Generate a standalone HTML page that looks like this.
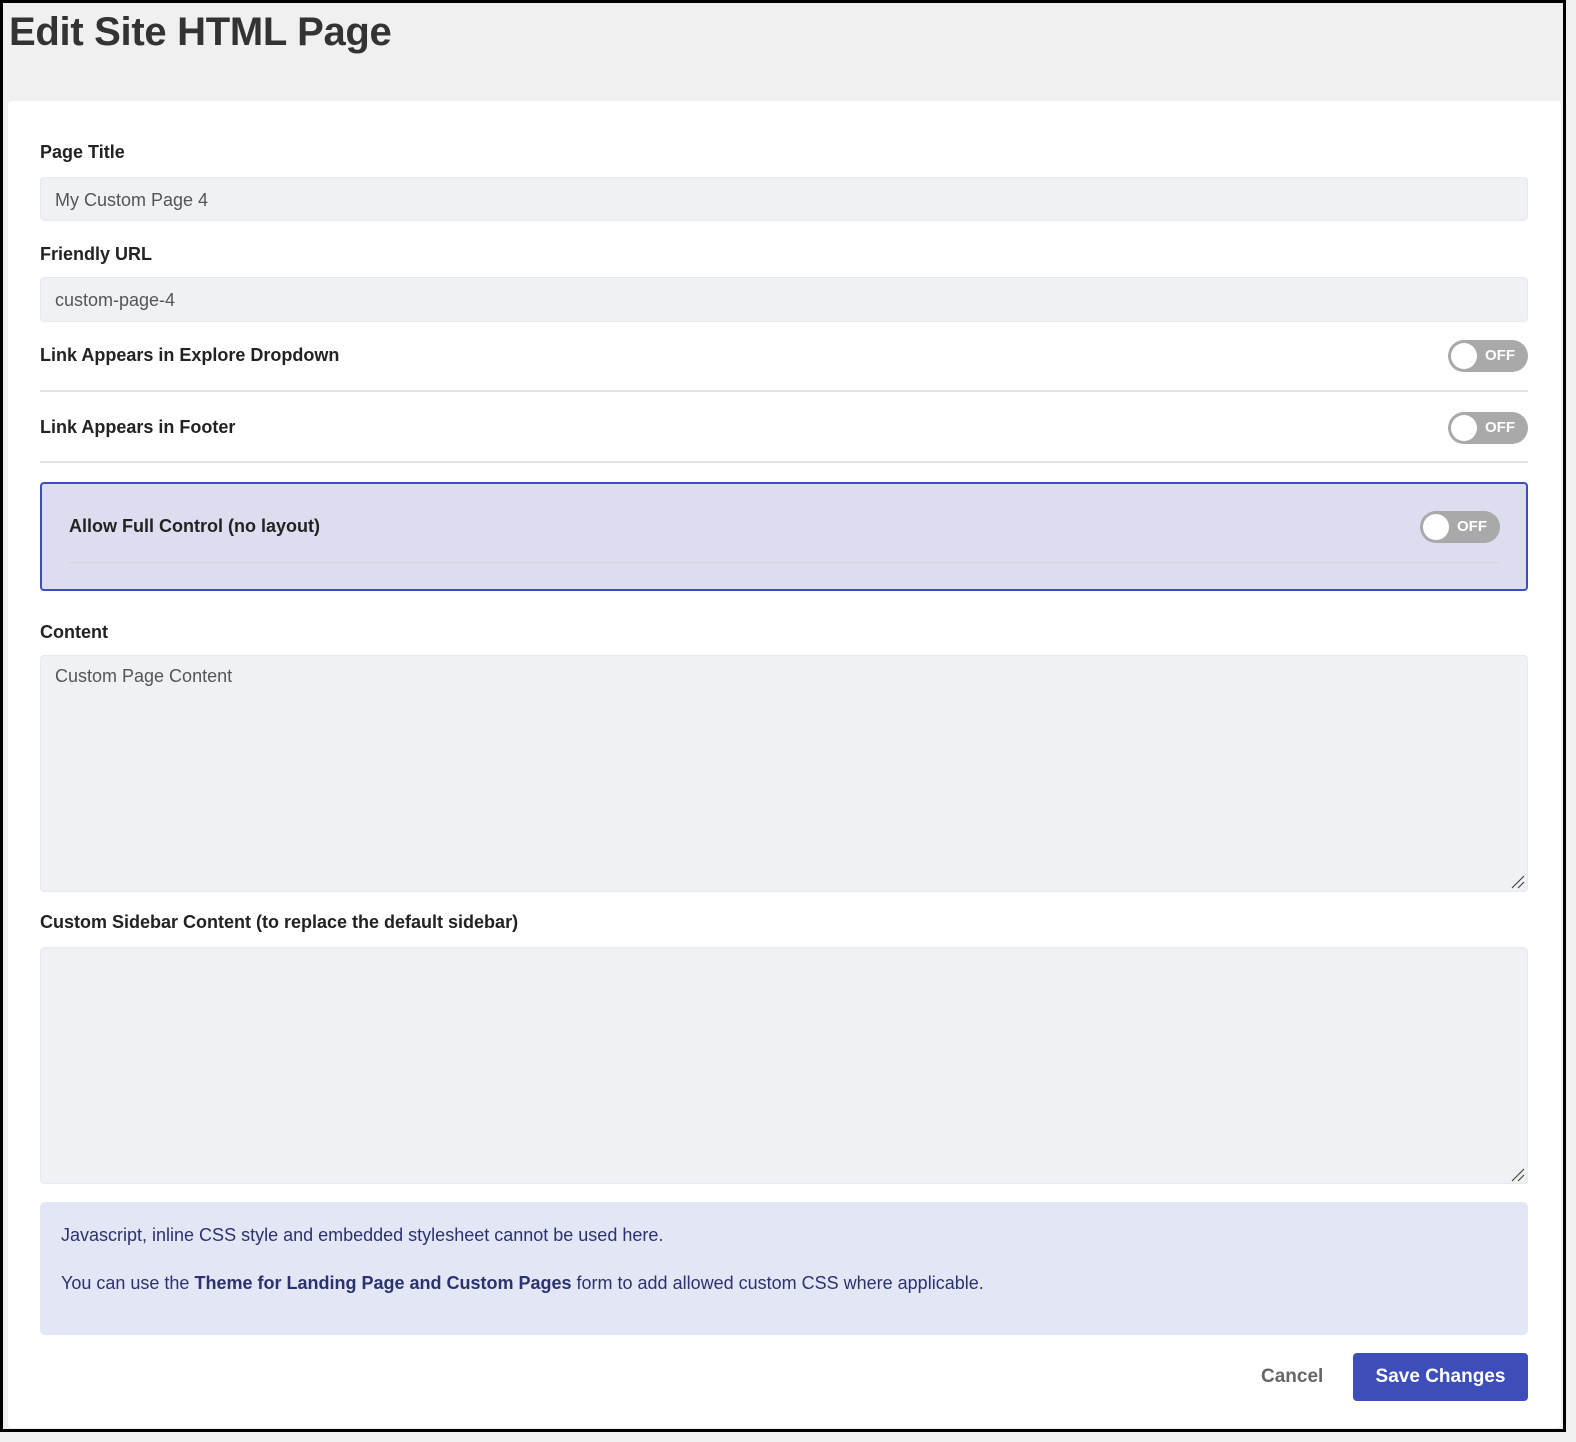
<!DOCTYPE html>
<html><head><style>
*{box-sizing:border-box;margin:0;padding:0}
body{width:1576px;height:1442px;background:#f0f0f0;font-family:"Liberation Sans",sans-serif;position:relative;overflow:hidden}
.frame{position:absolute;left:0;top:0;width:1566px;height:1432px;border:3px solid #000;background:#f0f0f0}
h1{position:absolute;left:9px;top:10px;font-size:40px;font-weight:bold;color:#333;letter-spacing:-0.3px}
.card{position:absolute;left:8px;top:101px;width:1553px;height:1327px;background:#fff;border-radius:4px}
.a{position:absolute}
.lbl{font-size:18px;font-weight:bold;color:#222}
.inp{background:#f0f1f4;border:1px solid #e8e9ee;border-radius:4px;font-size:18px;color:#555;padding-left:14px}
.tg{position:absolute;width:80px;height:32px;border-radius:16px;background:#a9a9a9}
.tg::before{content:"";position:absolute;left:3px;top:3px;width:26px;height:26px;border-radius:50%;background:#fff}
.tg span{position:absolute;left:37px;top:7px;color:#fff;font-size:15px;font-weight:bold}
.hr{position:absolute;height:2px;background:#e2e2e2}
.rs{position:absolute;width:14px;height:14px}
</style></head><body>
<div class="frame"></div>
<h1>Edit Site HTML Page</h1>
<div class="card"></div>
<div class="a lbl" style="left:40px;top:142px">Page Title</div>
<div class="a inp" style="left:40px;top:177px;width:1488px;height:44px;line-height:44px">My Custom Page 4</div>
<div class="a lbl" style="left:40px;top:244px">Friendly URL</div>
<div class="a inp" style="left:40px;top:277px;width:1488px;height:45px;line-height:45px">custom-page-4</div>
<div class="a lbl" style="left:40px;top:345px">Link Appears in Explore Dropdown</div>
<div class="tg" style="left:1448px;top:340px"><span>OFF</span></div>
<div class="hr" style="left:40px;top:390px;width:1488px"></div>
<div class="a lbl" style="left:40px;top:417px">Link Appears in Footer</div>
<div class="tg" style="left:1448px;top:412px"><span>OFF</span></div>
<div class="hr" style="left:40px;top:461px;width:1488px"></div>
<div class="a" style="left:40px;top:482px;width:1488px;height:109px;background:#dcdef0;border:2px solid #3d4dba;border-radius:4px"></div>
<div class="a lbl" style="left:69px;top:516px">Allow Full Control (no layout)</div>
<div class="tg" style="left:1420px;top:511px"><span>OFF</span></div>
<div class="hr" style="left:69px;top:562px;width:1431px;height:1px;background:#d2d4e4"></div>
<div class="a lbl" style="left:40px;top:622px">Content</div>
<div class="a inp" style="left:40px;top:655px;width:1488px;height:237px;padding-top:10px">Custom Page Content</div>
<svg class="rs" style="left:1511px;top:875px" viewBox="0 0 14 14"><path d="M1 13L13 1M7 13L13 7" stroke="#444" stroke-width="1.2"/></svg>
<div class="a lbl" style="left:40px;top:912px">Custom Sidebar Content (to replace the default sidebar)</div>
<div class="a inp" style="left:40px;top:947px;width:1488px;height:237px"></div>
<svg class="rs" style="left:1511px;top:1168px" viewBox="0 0 14 14"><path d="M1 13L13 1M7 13L13 7" stroke="#444" stroke-width="1.2"/></svg>
<div class="a" style="left:40px;top:1202px;width:1488px;height:133px;background:#e3e6f4;border-radius:5px;color:#2a3370;font-size:18px">
<div style="position:absolute;left:21px;top:23px">Javascript, inline CSS style and embedded stylesheet cannot be used here.</div>
<div style="position:absolute;left:21px;top:71px">You can use the <b>Theme for Landing Page and Custom Pages</b> form to add allowed custom CSS where applicable.</div>
</div>
<div class="a" style="left:1261px;top:1366px;font-size:19px;font-weight:bold;color:#666">Cancel</div>
<div class="a" style="left:1353px;top:1353px;width:175px;height:48px;background:#3d4dba;border-radius:4px;color:#fff;font-size:19px;font-weight:bold;text-align:center;line-height:48px">Save Changes</div>
</body></html>
